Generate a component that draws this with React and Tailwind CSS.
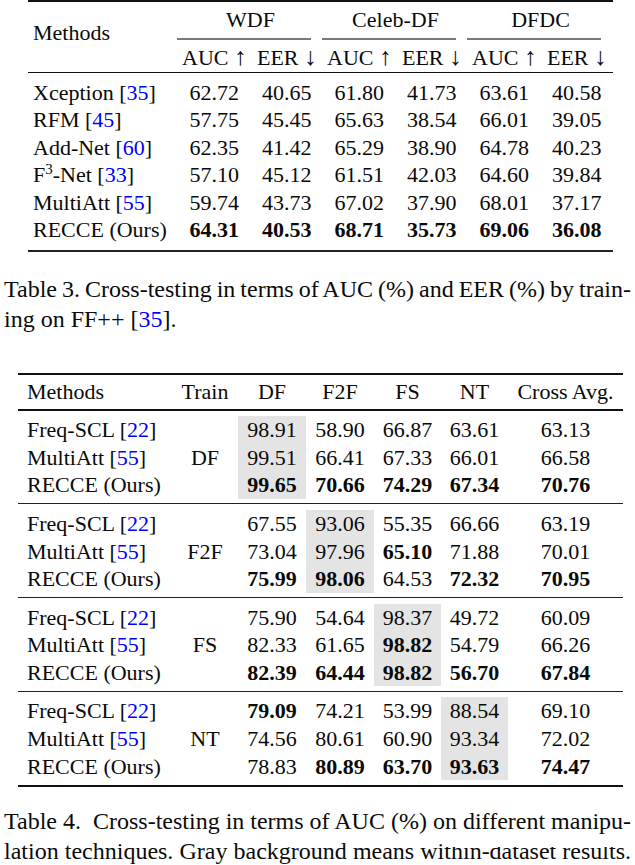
const serif = "font-['Liberation_Serif','Times_New_Roman',serif]";

const crossData = [
  { name: 'Xception', cite: '35', vals: ['62.72', '40.65', '61.80', '41.73', '63.61', '40.58'] },
  { name: 'RFM', cite: '45', vals: ['57.75', '45.45', '65.63', '38.54', '66.01', '39.05'] },
  { name: 'Add-Net', cite: '60', vals: ['62.35', '41.42', '65.29', '38.90', '64.78', '40.23'] },
  { name: 'F3', cite: '33', vals: ['57.10', '45.12', '61.51', '42.03', '64.60', '39.84'] },
  { name: 'MultiAtt', cite: '55', vals: ['59.74', '43.73', '67.02', '37.90', '68.01', '37.17'] },
  { name: 'RECCE (Ours)', vals: ['*64.31', '*40.53', '*68.71', '*35.73', '*69.06', '*36.08'] },
];

// '*' = bold
const manipGroups = [
  {
    train: 'DF',
    gray: 0,
    rows: [
      ['98.91', '58.90', '66.87', '63.61', '63.13'],
      ['99.51', '66.41', '67.33', '66.01', '66.58'],
      ['*99.65', '*70.66', '*74.29', '*67.34', '*70.76'],
    ],
  },
  {
    train: 'F2F',
    gray: 1,
    rows: [
      ['67.55', '93.06', '55.35', '66.66', '63.19'],
      ['73.04', '97.96', '*65.10', '71.88', '70.01'],
      ['*75.99', '*98.06', '64.53', '*72.32', '*70.95'],
    ],
  },
  {
    train: 'FS',
    gray: 2,
    rows: [
      ['75.90', '54.64', '98.37', '49.72', '60.09'],
      ['82.33', '61.65', '*98.82', '54.79', '66.26'],
      ['*82.39', '*64.44', '*98.82', '*56.70', '*67.84'],
    ],
  },
  {
    train: 'NT',
    gray: 3,
    rows: [
      ['*79.09', '74.21', '53.99', '88.54', '69.10'],
      ['74.56', '80.61', '60.90', '93.34', '72.02'],
      ['78.83', '*80.89', '*63.70', '*93.63', '*74.47'],
    ],
  },
];

const methodNames = [
  { name: 'Freq-SCL', cite: '22' },
  { name: 'MultiAtt', cite: '55' },
  { name: 'RECCE (Ours)' },
];

function Cite({ n }) {
  return (
    <>
      {' '}[<span className="text-[#0000ff]">{n}</span>]
    </>
  );
}

function Val({ v }) {
  if (v.startsWith('*')) return <span className="font-bold">{v.slice(1)}</span>;
  return <span>{v}</span>;
}

function MethodLabel({ name, cite }) {
  if (name === 'F3') {
    return (
      <>
        F<span className="relative -top-[8px] text-[15px]">3</span>-Net
        <Cite n={cite} />
      </>
    );
  }
  return (
    <>
      {name}
      {cite && <Cite n={cite} />}
    </>
  );
}

function Arrow({ c }) {
  return <span className="text-[25px] font-light">{c}</span>;
}

function CrossDatasetTable() {
  const groups = ['WDF', 'Celeb-DF', 'DFDC'];
  return (
    <div className="ml-[28px] w-[585px] text-[22px]">
      <div className="h-[2px] bg-[#111]" />
      <div className="flex pt-[4px] pb-[0.5px]">
        <div className="w-[150px] pl-[5px]">
          <div className="mt-[12.5px] h-[28px] leading-[28px]">Methods</div>
        </div>
        <div className="grid w-[435px] grid-cols-3">
          {groups.map((g) => (
            <div key={g} className="flex flex-col">
              <div className="h-[28px] text-center leading-[28px]">{g}</div>
              <div className="mt-[4px] mr-[12px] -ml-[1px] h-[1.5px] bg-[#7a7a7a]" />
              <div className="mt-[3.5px] grid h-[28px] grid-cols-2 text-center leading-[28px]">
                <span>
                  AUC <Arrow c="↑" />
                </span>
                <span>
                  EER <Arrow c="↓" />
                </span>
              </div>
            </div>
          ))}
        </div>
      </div>
      <div className="h-[1.5px] bg-[#111]" />
      <div className="pt-[5.5px] pb-[5.5px]">
        {crossData.map((r) => (
          <div key={r.name} className="flex h-[27.6px] leading-[27.6px]">
            <div className="w-[150px] pl-[5px] whitespace-nowrap">
              <MethodLabel name={r.name} cite={r.cite} />
            </div>
            <div className="grid w-[435px] grid-cols-6 text-center">
              {r.vals.map((v, i) => (
                <Val key={i} v={v} />
              ))}
            </div>
          </div>
        ))}
      </div>
      <div className="h-[2px] bg-[#222]" />
    </div>
  );
}

const cols = 'grid grid-cols-[154px_66px_68px_68px_67px_67px_115px]';

function ManipulationTable() {
  return (
    <div className="ml-[18px] w-[605px] text-[22px]">
      <div className="h-[2px] bg-[#111]" />
      <div className={`${cols} h-[27.6px] mt-[3px] mb-[3px] leading-[27.6px] text-center`}>
        <span className="pl-[9px] text-left">Methods</span>
        <span>Train</span>
        <span>DF</span>
        <span>F2F</span>
        <span>FS</span>
        <span>NT</span>
        <span>Cross Avg.</span>
      </div>
      <div className="h-[1.5px] bg-[#111]" />
      {manipGroups.map((g, gi) => (
        <div key={g.train}>
          {gi > 0 && <div className="h-[1px] bg-[#222]" />}
          <div className={gi === 0 ? 'pt-[5.4px] pb-[4.7px]' : 'pt-[5.5px] pb-[4.5px]'}>
            {g.rows.map((row, ri) => (
              <div key={ri} className={`${cols} h-[27.6px] leading-[27.6px] text-center`}>
                <span className="pl-[9px] text-left whitespace-nowrap">
                  <MethodLabel name={methodNames[ri].name} cite={methodNames[ri].cite} />
                </span>
                <span>{ri === 1 ? g.train : ''}</span>
                {row.map((v, ci) => (
                  <span key={ci} className={ci === g.gray ? 'bg-[#e4e4e4]' : ''}>
                    <Val v={v} />
                  </span>
                ))}
              </div>
            ))}
          </div>
        </div>
      ))}
      <div className="h-[2px] bg-[#111]" />
    </div>
  );
}

export default function App() {
  return (
    <div className={`${serif} relative h-[865px] w-[635px] overflow-hidden bg-white text-[#0a0a0a]`}>
      <CrossDatasetTable />

      <div className="mt-[23.6px] ml-[4px] w-[627px] text-[24px] leading-[29.5px]">
        <div className="text-justify whitespace-nowrap [text-align-last:justify] [word-spacing:-2px]">
          Table 3. Cross-testing in terms of AUC (%) and EER (%) by train-
        </div>
        <div>
          ing on FF++ [<span className="text-[#0000ff]">35</span>].
        </div>
      </div>

      <div className="mt-[39.3px]">
        <ManipulationTable />
      </div>

      <div className="mt-[20.3px] ml-[4px] w-[627px] text-[24px] leading-[29.5px]">
        <div className="text-justify whitespace-nowrap [text-align-last:justify]">
          Table 4.&nbsp; Cross-testing in terms of AUC (%) on different manipu-
        </div>
        <div className="text-justify whitespace-nowrap [text-align-last:justify]">
          lation techniques. Gray background means within-dataset results.
        </div>
      </div>

      {/* scan artefact over the last words */}
      <div className="absolute left-[445px] top-[837px] h-[10px] w-[190px] bg-white" />
    </div>
  );
}
